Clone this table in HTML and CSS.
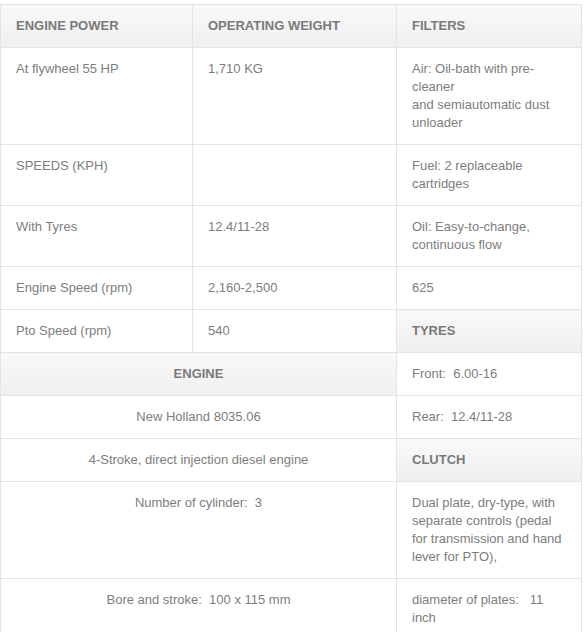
FILE: index.html
```html
<!DOCTYPE html>
<html>
<head>
<meta charset="utf-8">
<link rel="stylesheet" href="styles.css">
</head>
<body>
<div class="wrap">
<table class="spec">
  <colgroup>
    <col class="c1"><col class="c2"><col class="c3">
  </colgroup>
  <tr>
    <th>Engine Power</th>
    <th>Operating Weight</th>
    <th>Filters</th>
  </tr>
  <tr>
    <td>At flywheel 55 HP</td>
    <td>1,710 KG</td>
    <td>Air: Oil-bath with pre-cleaner<br>and semiautomatic dust unloader</td>
  </tr>
  <tr>
    <td>SPEEDS (KPH)</td>
    <td></td>
    <td>Fuel: 2 replaceable cartridges</td>
  </tr>
  <tr>
    <td>With Tyres</td>
    <td>12.4/11-28</td>
    <td>Oil: Easy-to-change, continuous flow</td>
  </tr>
  <tr>
    <td>Engine Speed (rpm)</td>
    <td>2,160-2,500</td>
    <td>625</td>
  </tr>
  <tr>
    <td>Pto Speed (rpm)</td>
    <td>540</td>
    <th>Tyres</th>
  </tr>
  <tr>
    <th colspan="2" class="center">Engine</th>
    <td>Front:&nbsp; 6.00-16</td>
  </tr>
  <tr>
    <td colspan="2" class="center">New Holland 8035.06</td>
    <td>Rear:&nbsp; 12.4/11-28</td>
  </tr>
  <tr>
    <td colspan="2" class="center">4-Stroke, direct injection diesel engine</td>
    <th>Clutch</th>
  </tr>
  <tr>
    <td colspan="2" class="center">Number of cylinder:&nbsp; 3</td>
    <td>Dual plate, dry-type, with separate controls (pedal for transmission and hand lever for PTO),</td>
  </tr>
  <tr>
    <td colspan="2" class="center">Bore and stroke:&nbsp; 100 x 115 mm</td>
    <td>diameter of plates:&nbsp;&nbsp; 11 inch</td>
  </tr>
</table>
</div>
</body>
</html>
```

FILE: styles.css
```css
html, body {
  margin: 0;
  padding: 0;
  background: #ffffff;
}

.wrap {
  padding-top: 4px;
}

.spec {
  border-collapse: collapse;
  table-layout: fixed;
  width: 581px;
  font-family: "Liberation Sans", Arial, sans-serif;
  font-size: 13px;
  line-height: 18px;
  color: #7d7d7d;
  border: 1px solid #e4e4e4;
}

.c1 { width: 192px; }
.c2 { width: 204px; }
.c3 { width: 185px; }

.spec th,
.spec td {
  border: 1px solid #e4e4e4;
  padding: 12px 15px;
  text-align: left;
  vertical-align: top;
}

.spec th {
  font-weight: bold;
  text-transform: uppercase;
  color: #7a7a7a;
  background: linear-gradient(to bottom, #f9f9f9, #efefef);
}

.spec .center {
  text-align: center;
}
```
